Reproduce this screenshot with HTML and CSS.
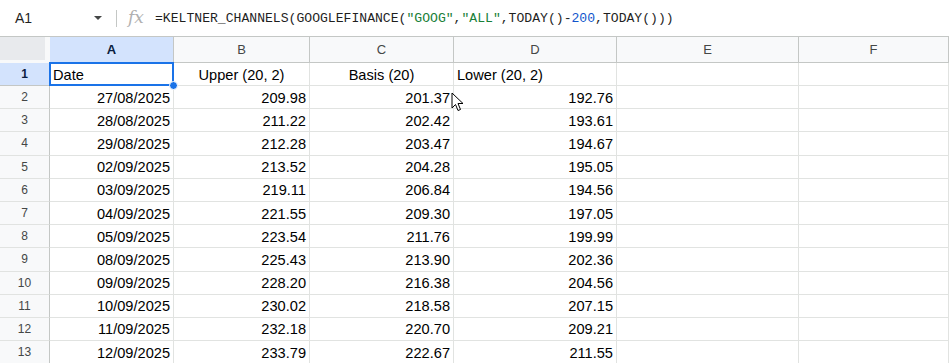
FILE: index.html
```html
<!DOCTYPE html>
<html>
  <head>
    <title>Sheet</title>
    <link rel="stylesheet" href="styles.css">
  </head>
  <body>
    <div class="formula_bar">
      <div class="name_box">
        <span class="cell_ref">A1</span>
        <span class="drop_arrow"></span>
      </div>
      <div class="divider"></div>
      <span class="fx">fx</span>
      <div class="formula">=KELTNER_CHANNELS(GOOGLEFINANCE(<span class="str">"GOOG"</span>,<span class="str">"ALL"</span>,TODAY()-<span class="num">200</span>,TODAY()))</div>
    </div>

    <div class="grid" id="grid">
      <div class="corner"></div>
      <div class="col_head active">A</div>
      <div class="col_head">B</div>
      <div class="col_head">C</div>
      <div class="col_head">D</div>
      <div class="col_head">E</div>
      <div class="col_head">F</div>

      <div class="row_head active">1</div>
      <div class="cell left selected">Date<span class="handle"></span></div>
      <div class="cell center">Upper (20, 2)</div>
      <div class="cell center">Basis (20)</div>
      <div class="cell left">Lower (20, 2)</div>
      <div class="cell"></div>
      <div class="cell"></div>
    </div>

    <svg class="pointer" width="14" height="20" viewBox="0 0 14 20">
      <path d="M1 1 L1 16 L4.5 12.5 L7 18.5 L9.5 17.5 L7 11.5 L12 11.5 Z" fill="#fff" stroke="#000" stroke-width="1" stroke-linejoin="round"/>
    </svg>

    <script>
      var grid = document.getElementById("grid");

      const rows = [
        ["27/08/2025", "209.98", "201.37", "192.76"],
        ["28/08/2025", "211.22", "202.42", "193.61"],
        ["29/08/2025", "212.28", "203.47", "194.67"],
        ["02/09/2025", "213.52", "204.28", "195.05"],
        ["03/09/2025", "219.11", "206.84", "194.56"],
        ["04/09/2025", "221.55", "209.30", "197.05"],
        ["05/09/2025", "223.54", "211.76", "199.99"],
        ["08/09/2025", "225.43", "213.90", "202.36"],
        ["09/09/2025", "228.20", "216.38", "204.56"],
        ["10/09/2025", "230.02", "218.58", "207.15"],
        ["11/09/2025", "232.18", "220.70", "209.21"],
        ["12/09/2025", "233.79", "222.67", "211.55"],
      ];

      rows.forEach((row, i) => {
        var head = document.createElement("div");
        head.className = "row_head";
        head.textContent = i + 2;
        grid.appendChild(head);

        row.forEach((value) => {
          var cell = document.createElement("div");
          cell.className = "cell right";
          cell.textContent = value;
          grid.appendChild(cell);
        });

        for (var k = 0; k < 2; k++) {
          var blank = document.createElement("div");
          blank.className = "cell";
          grid.appendChild(blank);
        }
      });
    </script>
  </body>
</html>
```

FILE: styles.css
```css
* {
  margin: 0px;
  padding: 0px;
  box-sizing: border-box;
}

body {
  width: 949px;
  height: 363px;
  overflow: hidden;
  background: #fff;
  font-family: "Liberation Sans", Arial, sans-serif;
  color: #000;
}

.formula_bar {
  height: 37px;
  display: flex;
  align-items: center;
  border-bottom: 1px solid #c4c7c5;
  background: #fff;
}

.name_box {
  width: 116px;
  display: flex;
  align-items: center;
  justify-content: space-between;
  padding-left: 15px;
  padding-right: 14px;
}

.cell_ref {
  font-size: 14px;
  color: #1f1f1f;
}

.drop_arrow {
  width: 0;
  height: 0;
  border-left: 4px solid transparent;
  border-right: 4px solid transparent;
  border-top: 4px solid #444746;
}

.divider {
  width: 1px;
  height: 17px;
  background: #c4c7c5;
}

.fx {
  width: 38px;
  text-align: center;
  font-family: "DejaVu Serif", serif;
  font-style: italic;
  font-size: 17px;
  color: #b0b0b0;
  margin-top: -2px;
}

.formula {
  font-family: "Liberation Mono", monospace;
  font-size: 13.1px;
  color: #1f1f1f;
}

.formula .str {
  color: #188038;
}

.formula .num {
  color: #1155cc;
}

.grid {
  display: grid;
  grid-template-columns: 50px 124px 136px 144px 163px 182px 1fr;
  grid-template-rows: 26px 23px repeat(12, 23.2px);
}

.corner {
  background: #f8f9fa;
  border-right: 5px solid #f8f9fa;
  border-bottom: 3px solid #f8f9fa;
  box-shadow: inset -1px -1px 0 #e8eaed;
  background-clip: padding-box;
  background-color: #e8eaed;
}

.col_head {
  display: flex;
  align-items: center;
  justify-content: center;
  background: #f8f9fa;
  border-right: 1px solid #c4c7c5;
  border-bottom: 1px solid #c4c7c5;
  font-size: 13px;
  color: #444746;
}

.row_head {
  display: flex;
  align-items: center;
  justify-content: center;
  background: #f8f9fa;
  border-right: 1px solid #c4c7c5;
  border-bottom: 1px solid #e1e3e1;
  font-size: 12px;
  color: #444746;
}

.col_head.active,
.row_head.active {
  background: #d3e3fd;
  color: #0b1d40;
  font-weight: bold;
}

.row_head.active {
  border-bottom-color: #c4c7c5;
}

.cell {
  display: flex;
  align-items: center;
  padding: 1px 3px 0;
  border-right: 1px solid #e1e3e1;
  border-bottom: 1px solid #e1e3e1;
  font-size: 14.6px;
  white-space: nowrap;
  position: relative;
}

.cell.left {
  justify-content: flex-start;
}

.cell.center {
  justify-content: center;
}

.cell.right {
  justify-content: flex-end;
}

.cell.selected::after {
  content: "";
  position: absolute;
  top: -1px;
  left: -1px;
  right: -1px;
  bottom: -1px;
  border: 2px solid #1a73e8;
}

.handle {
  position: absolute;
  right: -5px;
  bottom: -5px;
  width: 9px;
  height: 9px;
  border-radius: 50%;
  background: #1a73e8;
  border: 1px solid #fff;
  z-index: 2;
}

.pointer {
  position: absolute;
  left: 451px;
  top: 92px;
}
```
